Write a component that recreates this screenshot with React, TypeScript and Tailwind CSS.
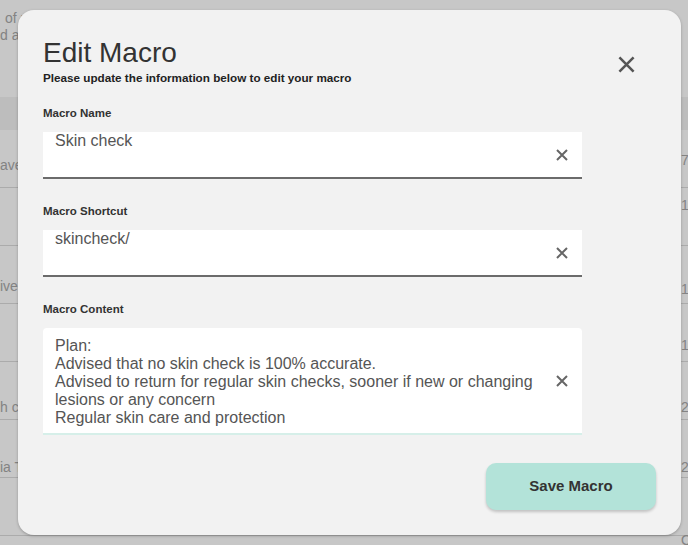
import React from "react"

const font = { fontFamily: '"Liberation Sans", Arial, sans-serif' }

function CrossIcon({ size = 12, stroke = 2, className = "" }: { size?: number; stroke?: number; className?: string }) {
  return (
    <svg width={size} height={size} viewBox="0 0 12 12" className={className} fill="none">
      <path d="M1 1L11 11M11 1L1 11" stroke="currentColor" strokeWidth={stroke} strokeLinecap="butt" />
    </svg>
  )
}

const rows = [
  { left: "ave", right: "7", lt: "mt-[27px]", rt: "mt-[22px]" },
  { left: "", right: "1", lt: "", rt: "mt-[9px]" },
  { left: "ive", right: "14", lt: "mt-[32px]", rt: "mt-[35px]" },
  { left: "", right: "1", lt: "", rt: "mt-[33px]" },
  { left: "h c", right: "2", lt: "mt-[37px]", rt: "mt-[37px]" },
  { left: "ia T", right: "2", lt: "mt-[39px]", rt: "mt-[39px]" },
  { left: "", right: "Op", lt: "", rt: "mt-[54px]" },
]

function Field({ label, value }: { label: string; value: string }) {
  return (
    <div>
      <p className="mt-[25px] text-[11.5px] leading-[14px] font-bold text-[#333]">{label}</p>
      <div className="mt-[12px] flex h-[47px] w-[539px] items-center justify-between border-b-2 border-[#6b6b6b] bg-white">
        <span className="self-start pl-[12px] text-[16px] leading-[18px] text-[#555]">{value}</span>
        <CrossIcon className="mr-[14px] text-[#666]" />
      </div>
    </div>
  )
}

export default function App() {
  return (
    <div className="relative h-[545px] w-full overflow-hidden bg-white" style={font}>
      {/* page behind the dialog */}
      <div className="text-[14px] text-[#a8a8a8]">
        <div className="h-[97px] pt-[10px] leading-[17px]">
          <p className="pl-[5px] whitespace-nowrap">of r</p>
          <p className="whitespace-nowrap">d as</p>
        </div>
        <div className="h-[33px] bg-[#f2f2f2]" />
        {rows.map((r, i) => (
          <div key={i} className="flex h-[58px] justify-between border-b border-[#dcdcdc]">
            <p className={`${r.lt} whitespace-nowrap leading-[16px]`}>{r.left}</p>
            <div className="w-[7px]">
              <p className={`${r.rt} whitespace-nowrap leading-[16px]`}>{r.right}</p>
            </div>
          </div>
        ))}
      </div>
      <div className="absolute inset-0 bg-black/[0.22]" />

      {/* dialog */}
      <div className="absolute left-[18px] top-[10px] h-[525px] w-[663px] rounded-[16px] bg-[#f2f2f2] px-[25px] pt-[27px] shadow-[0_1px_3px_rgba(0,0,0,0.25)]">
        <div className="flex items-start justify-between">
          <div>
            <h1 className="text-[28px] leading-[32px] text-[#333]">Edit Macro</h1>
            <p className="mt-[2px] text-[11.7px] leading-[14px] font-bold text-[#222]">
              Please update the information below to edit your macro
            </p>
          </div>
          <button className="mr-[21px] mt-[19px] text-[#555]">
            <CrossIcon size={17} stroke={1.8} />
          </button>
        </div>

        <div className="-mt-[4px]">
          <Field label="Macro Name" value="Skin check" />
          <Field label="Macro Shortcut" value="skincheck/" />
          <p className="mt-[25px] text-[11.5px] leading-[14px] font-bold text-[#333]">Macro Content</p>
          <div className="mt-[12px] flex h-[107px] w-[539px] items-center justify-between rounded-t-[4px] border-b-2 border-[#d6efe9] bg-white">
            <div className="self-start pl-[12px] pt-[9px] text-[16px] leading-[18px] text-[#555]">
              <p className="whitespace-nowrap">Plan:</p>
              <p className="whitespace-nowrap">Advised that no skin check is 100% accurate.</p>
              <p className="whitespace-nowrap">Advised to return for regular skin checks, sooner if new or changing</p>
              <p className="whitespace-nowrap">lesions or any concern</p>
              <p className="whitespace-nowrap">Regular skin care and protection</p>
            </div>
            <CrossIcon className="mr-[14px] shrink-0 text-[#666]" />
          </div>
        </div>

        <div className="mt-[28px] flex justify-end">
          <button className="h-[47px] w-[170px] rounded-[10px] bg-[#b3e3d9] text-[15px] font-bold text-[#333] shadow-[0_2px_3px_rgba(0,0,0,0.2)]">
            Save Macro
          </button>
        </div>
      </div>
    </div>
  )
}
